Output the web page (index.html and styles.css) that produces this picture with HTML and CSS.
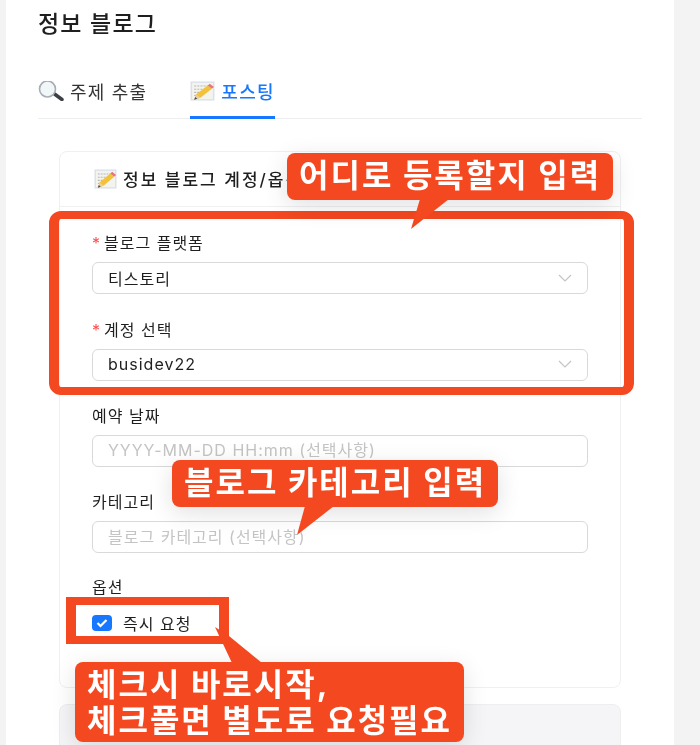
FILE: index.html
```html
<!DOCTYPE html>
<html lang="ko">
<head>
  <meta charset="UTF-8">
  <meta name="viewport" content="width=device-width, initial-scale=1.0">
  <title>정보 블로그</title>
  <link rel="stylesheet" href="styles.css">
</head>
<body>
  <svg class="defs" width="0" height="0">
    <symbol id="memo" viewBox="0 0 24 22" preserveAspectRatio="none">
      <rect x="0.500" y="0.500" width="23" height="21" fill="#dbe0ea"/>
      <rect x="2" y="2" width="20" height="18" fill="#f4f4ef"/>
      <path d="M4 5.500h16M4 9h16M4 12.500h8M4 16h5" stroke="#b4b8bc" stroke-width="1.200" stroke-dasharray="2 1"/>
      <path d="M4 20.500l2-6L17 5l4 3.500-11 10z" fill="#f3c13a"/>
      <path d="M4 20.500l2-6 4 4z" fill="#e8cf9c"/>
      <path d="M17 5l2-2 4 3.500-2 2z" fill="#e2777c"/>
      <path d="M4 20.500l1-3 2 2z" fill="#4a4a4a"/>
    </symbol>
  </svg>

  <div class="panel">
    <h1 class="title">정보 블로그</h1>

    <div class="tabs">
      <div class="tab">
        <svg class="tab-icon" viewBox="0 0 26 20">
          <path d="M16.500 13l7.500 5.500" stroke="#3d3f44" stroke-width="3.500" stroke-linecap="round"/>
          <circle cx="9.500" cy="8" r="8" fill="#f1f6f9" stroke="#a6adb4" stroke-width="1.600"/>
        </svg>
        주제 추출
      </div>
      <div class="tab tab-active">
        <svg class="tab-icon"><use href="#memo"/></svg>
        포스팅
      </div>
    </div>

    <div class="card">
      <div class="card-head">
        <svg class="head-icon"><use href="#memo"/></svg>
        정보 블로그 계정/옵션
      </div>
      <div class="card-body">
        <div class="field">
          <div class="label"><span class="req">*</span>블로그 플랫폼</div>
          <div class="select">
            티스토리
            <svg class="chevron" viewBox="0 0 14 8"><path d="M1 1l6 6 6-6" fill="none" stroke="#c4c4c4" stroke-width="1.200"/></svg>
          </div>
        </div>
        <div class="field">
          <div class="label"><span class="req">*</span>계정 선택</div>
          <div class="select">
            busidev22
            <svg class="chevron" viewBox="0 0 14 8"><path d="M1 1l6 6 6-6" fill="none" stroke="#c4c4c4" stroke-width="1.200"/></svg>
          </div>
        </div>
        <div class="field">
          <div class="label">예약 날짜</div>
          <input class="input" placeholder="YYYY-MM-DD HH:mm (선택사항)">
        </div>
        <div class="field">
          <div class="label">카테고리</div>
          <input class="input" placeholder="블로그 카테고리 (선택사항)">
        </div>
        <div class="field field-option">
          <div class="label">옵션</div>
          <div class="check-row">
            <span class="checkbox">
              <svg viewBox="0 0 20 16"><path d="M5.500 8l3 3 6-6" fill="none" stroke="#fff" stroke-width="2.200"/></svg>
            </span>
            즉시 요청
          </div>
        </div>
      </div>
    </div>

    <div class="card-next"></div>
  </div>

  <!-- annotations drawn over the screenshot -->
  <div class="mark mark-account"></div>
  <div class="mark mark-check"></div>

  <div class="callout callout-where">어디로 등록할지 입력</div>
  <div class="callout callout-cat">블로그 카테고리 입력</div>
  <div class="callout callout-start">체크시 바로시작,<br>체크풀면 별도로 요청필요</div>

  <svg class="tails" width="700" height="745" viewBox="0 0 700 745">
    <path d="M420 199L411 229L449 199z"/>
    <path d="M305 506L297 535L334 506z"/>
    <path d="M215 627L232 663L262 663L229 636z"/>
  </svg>
</body>
</html>
```

FILE: styles.css
```css
* {
  box-sizing: border-box;
}

html, body {
  height: 745px;
  overflow: hidden;
}

body {
  margin: 0;
  background-color: #f3f3f4;
  color: #1f1f1f;
  font-family: Inter, "Noto Sans CJK KR", sans-serif;
  font-size: 16px;
  letter-spacing: 1px;
  position: relative;
  filter: blur(0.4px);
}

.defs {
  position: absolute;
}

.panel {
  margin-left: 6px;
  width: 668px;
  height: 745px;
  background-color: #fff;
  padding: 0 32px;
}

.title {
  margin: 0;
  padding-top: 10px;
  height: 77px;
  font-size: 23px;
  line-height: 28px;
  font-weight: 500;
  letter-spacing: 1.200px;
}

.tabs {
  display: flex;
  gap: 43px;
  height: 42px;
  border-bottom: 1px solid #eeeeef;
}

.tab {
  display: flex;
  gap: 6px;
  height: 42px;
  padding-bottom: 14px;
  align-items: center;
  font-size: 18px;
  letter-spacing: 1.200px;
  color: #333;
}

.tab-icon {
  width: 26px;
  height: 20px;
}

.tab-active {
  color: #1677ff;
  font-weight: 500;
  letter-spacing: 1.300px;
  border-bottom: 3px solid #1677ff;
  padding-bottom: 11px;
}

.tab-active .tab-icon {
  width: 25px;
}

.card {
  margin: 32px 21px 0;
  height: 537px;
  border: 1px solid #f0f0f0;
  border-radius: 8px;
}

.card-head {
  display: flex;
  align-items: center;
  gap: 6px;
  height: 55px;
  padding-left: 34px;
  padding-bottom: 1px;
  border-bottom: 1px solid #f0f0f0;
  font-size: 17px;
  font-weight: 500;
  letter-spacing: 2px;
}

.head-icon {
  width: 23px;
  height: 20px;
}

.card-body {
  padding: 23.400px 32px 0;
}

.field {
  height: 86.300px;
}

.label {
  height: 32px;
  padding-top: 2px;
  line-height: 22px;
}

.req {
  color: #ff4d4f;
  margin-right: 3px;
}

.select, .input {
  display: flex;
  align-items: center;
  justify-content: space-between;
  width: 100%;
  height: 32px;
  padding: 0 15px 1px;
  border: 1px solid #d9d9d9;
  border-radius: 6px;
  background-color: #fff;
  color: #1f1f1f;
  font-family: inherit;
  font-size: 16px;
  letter-spacing: 1px;
}

.input::placeholder {
  color: #c4c4c4;
}

.chevron {
  width: 14px;
  height: 8px;
}

.field-option .label {
  margin-top: -2px;
}

.check-row {
  display: flex;
  align-items: center;
  gap: 11px;
  height: 22px;
  margin-top: 6px;
}

.checkbox {
  display: block;
  width: 20px;
  height: 16px;
  border-radius: 4px;
  background-color: #1677ff;
}

.checkbox svg {
  display: block;
}

.card-next {
  margin: 16px 21px 0;
  height: 60px;
  background-color: #f5f5f7;
  border: 1px solid #eeeeef;
  border-radius: 8px;
}

.mark {
  position: absolute;
  border-color: #f44820;
  border-style: solid;
  border-width: 8px 10px;
}

.mark-account {
  left: 49px;
  top: 211px;
  width: 585px;
  height: 184px;
  border-radius: 12px;
}

.mark-check {
  left: 66px;
  top: 597px;
  width: 163px;
  height: 47px;
}

.callout {
  position: absolute;
  background-color: #f44820;
  color: #fff;
  font-size: 32px;
  font-weight: 700;
  letter-spacing: 2px;
  border-radius: 8px;
  box-shadow: 0 6px 24px rgba(0, 0, 0, 0.12);
  white-space: nowrap;
}

.callout-where {
  left: 287px;
  top: 153px;
  width: 326px;
  height: 47px;
  padding-left: 12px;
  line-height: 46px;
}

.callout-cat {
  left: 172px;
  top: 460px;
  width: 326px;
  height: 47px;
  padding-left: 12px;
  line-height: 46px;
}

.callout-start {
  left: 75px;
  top: 662px;
  width: 389px;
  height: 80px;
  padding: 5px 0 0 12px;
  line-height: 36px;
}

.tails {
  position: absolute;
  left: 0;
  top: 0;
  fill: #f44820;
}
```
